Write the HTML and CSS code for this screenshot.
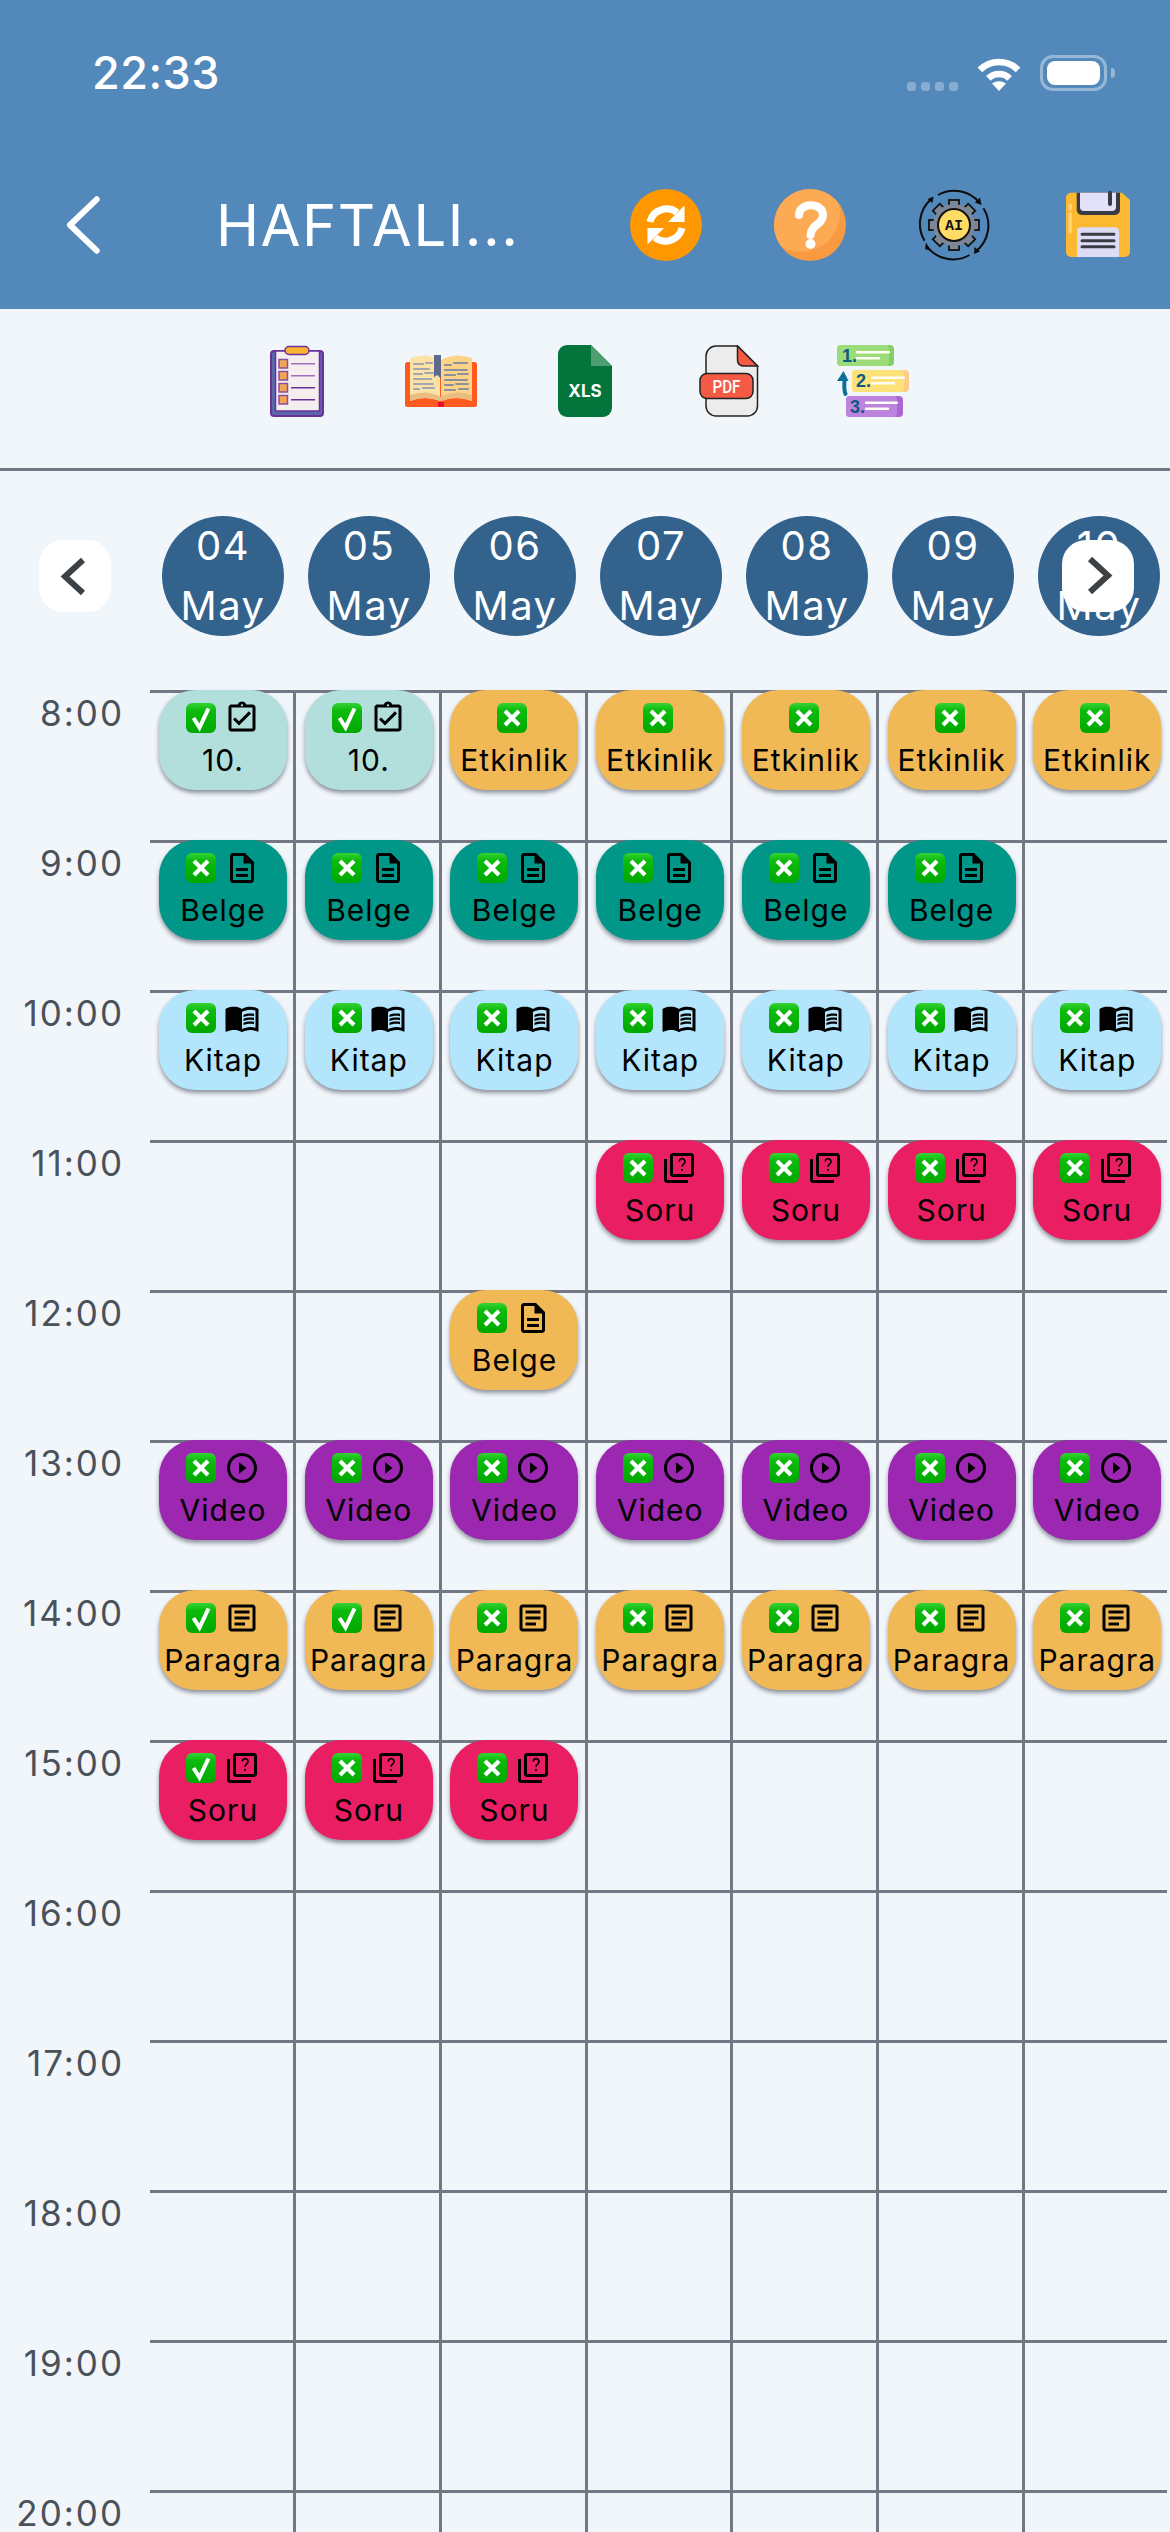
FILE: index.html
```html
<!DOCTYPE html>
<html lang="en">

<head>
  <meta charset="UTF-8">
  <meta name="viewport" content="width=device-width, initial-scale=1.0">
  <title>Haftalik Program</title>
  <link rel="stylesheet" href="styles.css">
</head>

<body>

  <!-- shared icons for the chips -->
  <svg class="defs" width="0" height="0">
    <defs>
      <linearGradient id="green" x1="0" y1="0" x2="0" y2="1">
        <stop offset="0" stop-color="#35d335" />
        <stop offset="0.25" stop-color="#0dbb0d" />
        <stop offset="1" stop-color="#00a800" />
      </linearGradient>
      <symbol id="yes" viewBox="0 0 30 30">
        <rect width="30" height="30" rx="6" fill="url(#green)" />
        <path d="M7.500 15l6 9.500L22.500 5.500" fill="none" stroke="#fff" stroke-width="4" />
      </symbol>
      <symbol id="no" viewBox="0 0 30 30">
        <rect width="30" height="30" rx="6" fill="url(#green)" />
        <path d="M8 8l14 14M22 8L8 22" fill="none" stroke="#fff" stroke-width="4.200" />
      </symbol>
      <symbol id="clip" viewBox="0 0 24 24">
        <path d="M18 9l-1.41-1.42L10 14.17l-2.59-2.58L6 13l4 4zm1-6h-4.18C14.4 1.84 13.3 1 12 1c-1.3 0-2.4.84-2.82 2H5c-.14 0-.27.01-.4.04-.39.08-.74.28-1.01.55-.18.18-.33.4-.43.64-.1.23-.16.49-.16.77v14c0 .27.06.54.16.78s.25.45.43.64c.27.27.62.47 1.01.55.13.02.26.03.4.03h14c1.1 0 2-.9 2-2V5c0-1.1-.9-2-2-2zm-7-.25c.41 0 .75.34.75.75s-.34.75-.75.75-.75-.34-.75-.75.34-.75.75-.75zM19 19H5V5h14v14z" />
      </symbol>
      <symbol id="doc" viewBox="0 0 24 24">
        <path d="M8 16h8v2H8zm0-4h8v2H8zm6-10H6c-1.1 0-2 .9-2 2v16c0 1.1.89 2 1.99 2H18c1.1 0 2-.9 2-2V8l-6-6zm4 18H6V4h7v5h5v11z" />
      </symbol>
      <symbol id="book" viewBox="0 0 24 24">
        <path d="M21 5c-1.11-.35-2.33-.5-3.5-.5-1.95 0-4.05.4-5.5 1.5-1.45-1.1-3.55-1.5-5.5-1.5S2.45 4.9 1 6v14.65c0 .25.25.5.5.5.1 0 .15-.05.25-.05C3.1 20.45 5.05 20 6.5 20c1.95 0 4.05.4 5.5 1.5 1.35-.85 3.8-1.5 5.5-1.5 1.65 0 3.35.3 4.75 1.05.1.05.15.05.25.05.25 0 .5-.25.5-.5V6c-.6-.45-1.25-.75-2-1zm0 13.5c-1.1-.35-2.3-.5-3.5-.5-1.7 0-4.15.65-5.5 1.5V8c1.35-.85 3.8-1.5 5.5-1.5 1.2 0 2.4.15 3.5.5v11.5z" />
        <path d="M17.5 10.5c.88 0 1.73.09 2.5.26V9.24c-.79-.15-1.64-.24-2.5-.24-1.7 0-3.24.29-4.5.83v1.66c1.13-.64 2.7-.99 4.5-.99zM13 12.49v1.66c1.13-.64 2.7-.99 4.5-.99.88 0 1.73.09 2.5.26V11.9c-.79-.15-1.64-.24-2.5-.24-1.7 0-3.24.3-4.5.83zM17.5 14.33c-1.7 0-3.24.29-4.5.83v1.66c1.13-.64 2.7-.99 4.5-.99.88 0 1.73.09 2.5.26v-1.52c-.79-.16-1.64-.24-2.5-.24z" />
      </symbol>
      <symbol id="quiz" viewBox="0 0 24 24">
        <path d="M4 6H2v14c0 1.1.9 2 2 2h14v-2H4V6zm16-4H8c-1.1 0-2 .9-2 2v12c0 1.1.9 2 2 2h12c1.1 0 2-.9 2-2V4c0-1.1-.9-2-2-2zm0 14H8V4h12v12z" />
        <path d="M12.2 7.6a1.9 1.9 0 1 1 3 1.6c-.8.6-1.2 1-1.2 2" fill="none" stroke="#000" stroke-width="1.1" />
        <circle cx="14" cy="13.4" r=".75" />
      </symbol>
      <symbol id="play" viewBox="0 0 24 24">
        <path d="M12 2C6.48 2 2 6.48 2 12s4.48 10 10 10 10-4.48 10-10S17.52 2 12 2zm0 18c-4.41 0-8-3.59-8-8s3.59-8 8-8 8 3.59 8 8-3.59 8-8 8z" />
        <path d="M10 15.8l5-3.8-5-3.8z" />
      </symbol>
      <symbol id="article" viewBox="0 0 24 24">
        <path d="M19 5v14H5V5h14m0-2H5c-1.1 0-2 .9-2 2v14c0 1.1.9 2 2 2h14c1.1 0 2-.9 2-2V5c0-1.1-.9-2-2-2z" />
        <path d="M14 17H7v-2h7v2zm3-4H7v-2h10v2zm0-4H7V7h10v2z" />
      </symbol>
    </defs>
  </svg>

  <header class="appbar">
    <div class="status">
      <span class="clock">22:33</span>
      <div class="status-icons">
        <div class="signal"><i></i><i></i><i></i><i></i></div>
        <svg class="wifi" viewBox="0 0 48 36">
          <path d="M4.9 14.9A27 27 0 0 1 43.1 14.9M13.4 23.4A15 15 0 0 1 34.6 23.4" fill="none" stroke="#fff" stroke-width="6.5" />
          <path d="M24 36L17 28.5Q24 24 31 28.5z" fill="#fff" />
        </svg>
        <div class="battery"><div class="battery-fill"></div></div>
        <div class="battery-cap"></div>
      </div>
    </div>
    <div class="nav">
      <svg class="back" viewBox="0 0 36 60">
        <path d="M31.7 4.3L5 30l26.7 25.7" fill="none" stroke="#fff" stroke-width="6" stroke-linecap="round" stroke-linejoin="round" />
      </svg>
      <h1 class="title">HAFTALI...</h1>
      <div class="actions">
        <svg class="action" viewBox="0 0 72 72">
          <circle cx="36" cy="36" r="36" fill="#ff9800" />
          <path d="M20 33A17 17 0 0 1 47 23.500M52 39A17 17 0 0 1 25 48.500" fill="none" stroke="#fff" stroke-width="7" />
          <path d="M54.500 16.500V33H38zM17.500 55.500V39H34z" fill="#fff" />
        </svg>
        <svg class="action" viewBox="0 0 72 72">
          <clipPath id="helpclip"><circle cx="36" cy="36" r="36" /></clipPath>
          <circle cx="36" cy="36" r="36" fill="#f99a41" />
          <circle cx="27" cy="24" r="39" fill="#fdaa55" clip-path="url(#helpclip)" />
          <path d="M25 26C25 13 49 13 49 26C49 36 37 35 36.500 46" fill="none" stroke="#fff" stroke-width="8" stroke-linecap="round" />
          <circle cx="36.500" cy="55" r="5" fill="#fff" />
        </svg>
        <svg class="action" viewBox="0 0 72 72">
          <g fill="none" stroke="#0c0c0c" stroke-width="2">
            <path d="M20 6A33 33 0 0 1 61.500 13.700" />
            <path d="M65.500 19.300A33 33 0 0 1 57.500 62.700" />
            <path d="M51.500 66A33 33 0 0 1 9 57.700" />
            <path d="M6.500 51.700A33 33 0 0 1 13 10.300" />
          </g>
          <path d="M63.500 16L57 13.500L62 8.500zM56 65L56.500 58L62 62.500zM7 60L13 62L8 53.500zM15.500 7.500L14.500 14L9.500 10z" fill="#0c0c0c" />
          <g fill="#7d8796" stroke="#111" stroke-width="1.800">
            <rect x="31" y="11" width="10" height="8" transform="rotate(0 36 36)" />
            <rect x="31" y="11" width="10" height="8" transform="rotate(45 36 36)" />
            <rect x="31" y="11" width="10" height="8" transform="rotate(90 36 36)" />
            <rect x="31" y="11" width="10" height="8" transform="rotate(135 36 36)" />
            <rect x="31" y="11" width="10" height="8" transform="rotate(180 36 36)" />
            <rect x="31" y="11" width="10" height="8" transform="rotate(225 36 36)" />
            <rect x="31" y="11" width="10" height="8" transform="rotate(270 36 36)" />
            <rect x="31" y="11" width="10" height="8" transform="rotate(315 36 36)" />
            <circle cx="36" cy="36" r="21" stroke="none" />
          </g>
          <circle cx="36" cy="36" r="16" fill="#ffdc64" stroke="#111" stroke-width="2" />
          <text class="ai-text" x="36" y="41" text-anchor="middle">AI</text>
        </svg>
        <svg class="action" viewBox="0 0 72 72">
          <path d="M9 3.700H60L68 11V63A5 5 0 0 1 63 68H9A5 5 0 0 1 4 63V8.700A5 5 0 0 1 9 3.700z" fill="#fbb931" />
          <path d="M14.700 3.700H58V21A5 5 0 0 1 53 26H19.700A5 5 0 0 1 14.700 21z" fill="#3b3b44" />
          <path d="M18 3.700H54V18A4 4 0 0 1 50 22H22A4 4 0 0 1 18 18z" fill="#e4e2fb" />
          <path d="M48 3.700V15" stroke="#3b3b44" stroke-width="4" stroke-linecap="round" />
          <path d="M15 68V42.300A4 4 0 0 1 19 38.300H53A4 4 0 0 1 57 42.300V68z" fill="#dcdcf6" />
          <path d="M20 45.300H52M20 51.700H52M20 57.700H52" stroke="#3b3b44" stroke-width="3" stroke-linecap="round" />
          <path d="M8.300 16V20M8.300 25V43" stroke="#fdd27a" stroke-width="3.500" stroke-linecap="round" />
        </svg>
      </div>
    </div>
  </header>

  <div class="tools">
    <svg class="tool" viewBox="0 0 72 72">
      <rect x="10" y="6" width="52" height="65" rx="3" fill="#5a6aa8" stroke="#6c2f9b" stroke-width="2" />
      <rect x="14.500" y="6" width="44" height="60" fill="#f4eeee" stroke="#6c2f9b" stroke-width="1.500" />
      <rect x="24" y="1.500" width="24" height="8" rx="4" fill="#f9b233" stroke="#6c2f9b" stroke-width="1.500" />
      <g fill="#f4a553" stroke="#8a4ea8" stroke-width="1.500">
        <rect x="18" y="14.500" width="8.500" height="8.500" />
        <rect x="18" y="26.500" width="8.500" height="8.500" />
        <rect x="18" y="38.500" width="8.500" height="8.500" />
        <rect x="18" y="50.500" width="8.500" height="8.500" />
      </g>
      <path d="M30 18.700H54M30 30.700H54" stroke="#a36bbd" stroke-width="1.500" />
      <path d="M30 42.700H54M30 54.700H54" stroke="#6c2f9b" stroke-width="1.500" />
    </svg>
    <svg class="tool" viewBox="0 0 72 72">
      <rect x="0" y="17" width="72" height="45" rx="2.500" fill="#ff5a1f" />
      <rect x="33" y="57" width="6" height="5" fill="#e8112d" />
      <path d="M5 13Q22 7 35 15V56Q20 50 5 56z" fill="#fde2a8" />
      <path d="M67 13Q50 7 36 15V56Q52 50 67 56z" fill="#fdd388" />
      <path d="M5 50Q22 44 36 52Q50 44 67 50V56Q50 50 36 56Q20 50 5 56z" fill="#e9bd80" />
      <path d="M29 10H36V34L32.500 30L29 32z" fill="#5d6a8e" />
      <g stroke="#a2a7b2" stroke-width="2.200" stroke-linecap="round">
        <path d="M9 19H18M21 18H27M9 24H24M9 29H17M20 28H28M9 34H26M9 39H28M9 44H14M18 43H29" />
      </g>
      <g stroke="#8b90a0" stroke-width="2.200" stroke-linecap="round">
        <path d="M40 20H46M49 18H62M40 25H62M40 30H50M53 29H63M40 35H62M40 40H48M51 39H63M40 45H50M54 44H63" />
      </g>
    </svg>
    <svg class="tool" viewBox="0 0 72 72">
      <path d="M18 0H42L63 21V63A9 9 0 0 1 54 72H18A9 9 0 0 1 9 63V9A9 9 0 0 1 18 0z" fill="#04743d" />
      <path d="M42 0L63 21H42z" fill="#4e9e72" />
      <text class="xls-text" x="36" y="52" text-anchor="middle">XLS</text>
    </svg>
    <svg class="tool" viewBox="0 0 72 72">
      <path d="M23 1H44.500L64.500 21V61A10 10 0 0 1 54.500 71H23A10 10 0 0 1 13 61V11A10 10 0 0 1 23 1z" fill="#ececec" stroke="#222" stroke-width="1.500" />
      <path d="M44.500 1L64.500 21H50A5.500 5.500 0 0 1 44.500 15.500z" fill="#f55a44" stroke="#222" stroke-width="1.500" />
      <rect x="7" y="28.500" width="53" height="25" rx="7" fill="#f55a44" stroke="#222" stroke-width="1.500" />
      <text class="pdf-text" x="19.500" y="47.500" textLength="28" lengthAdjust="spacingAndGlyphs">PDF</text>
    </svg>
    <svg class="tool" viewBox="0 0 72 72">
      <rect x="0" y="0" width="57" height="21" rx="4" fill="#85cf65" />
      <rect x="0" y="0" width="52" height="21" rx="4" fill="#9ddc7a" />
      <rect x="15" y="25" width="57" height="22" rx="4" fill="#fdcb85" />
      <rect x="15" y="25" width="52" height="22" rx="4" fill="#fde27a" />
      <rect x="9" y="51" width="57" height="21" rx="4" fill="#ab66d6" />
      <rect x="9" y="51" width="51" height="21" rx="4" fill="#bd83dd" />
      <text class="num-text" x="5" y="17">1.</text>
      <text class="num-text" x="19" y="42">2.</text>
      <text class="num-text" x="13" y="68">3.</text>
      <path d="M20 7.300H52M20 13.300H42M35 32.700H67M35 38.300H57M29 57.700H60M29 63.700H51" stroke="#fdfdf5" stroke-width="2.400" stroke-linecap="round" fill="none" />
      <path d="M8.500 49C6.500 44 7.500 38 7.500 33" stroke="#0e6f96" stroke-width="4" fill="none" stroke-linecap="round" />
      <path d="M0 36L6.500 26L11.500 36z" fill="#0e6f96" />
    </svg>
  </div>

  <div class="dates">
    <button class="page-btn">
      <svg viewBox="0 0 72 72"><path d="M44 20L26 36.500L44 53" fill="none" stroke="#3c4146" stroke-width="6" /></svg>
    </button>
    <div class="day">04<br>May</div>
    <div class="day">05<br>May</div>
    <div class="day">06<br>May</div>
    <div class="day">07<br>May</div>
    <div class="day">08<br>May</div>
    <div class="day">09<br>May</div>
    <div class="day">10<br>May</div>
    <button class="page-btn page-next">
      <svg viewBox="0 0 72 72"><path d="M28 19L46 35.500L28 52" fill="none" stroke="#3c4146" stroke-width="6" /></svg>
    </button>
  </div>

  <main class="schedule">
    <div class="row">
      <div class="hour">8:00</div>
      <div class="cell"><div class="chip mint"><div class="chip-icons"><svg class="emoji"><use href="#yes" /></svg><svg class="ico"><use href="#clip" /></svg></div><span>10.</span></div></div>
      <div class="cell"><div class="chip mint"><div class="chip-icons"><svg class="emoji"><use href="#yes" /></svg><svg class="ico"><use href="#clip" /></svg></div><span>10.</span></div></div>
      <div class="cell"><div class="chip amber"><div class="chip-icons solo"><svg class="emoji"><use href="#no" /></svg></div><span>Etkinlik</span></div></div>
      <div class="cell"><div class="chip amber"><div class="chip-icons solo"><svg class="emoji"><use href="#no" /></svg></div><span>Etkinlik</span></div></div>
      <div class="cell"><div class="chip amber"><div class="chip-icons solo"><svg class="emoji"><use href="#no" /></svg></div><span>Etkinlik</span></div></div>
      <div class="cell"><div class="chip amber"><div class="chip-icons solo"><svg class="emoji"><use href="#no" /></svg></div><span>Etkinlik</span></div></div>
      <div class="cell"><div class="chip amber"><div class="chip-icons solo"><svg class="emoji"><use href="#no" /></svg></div><span>Etkinlik</span></div></div>
    </div>
    <div class="row">
      <div class="hour">9:00</div>
      <div class="cell"><div class="chip teal"><div class="chip-icons"><svg class="emoji"><use href="#no" /></svg><svg class="ico"><use href="#doc" /></svg></div><span>Belge</span></div></div>
      <div class="cell"><div class="chip teal"><div class="chip-icons"><svg class="emoji"><use href="#no" /></svg><svg class="ico"><use href="#doc" /></svg></div><span>Belge</span></div></div>
      <div class="cell"><div class="chip teal"><div class="chip-icons"><svg class="emoji"><use href="#no" /></svg><svg class="ico"><use href="#doc" /></svg></div><span>Belge</span></div></div>
      <div class="cell"><div class="chip teal"><div class="chip-icons"><svg class="emoji"><use href="#no" /></svg><svg class="ico"><use href="#doc" /></svg></div><span>Belge</span></div></div>
      <div class="cell"><div class="chip teal"><div class="chip-icons"><svg class="emoji"><use href="#no" /></svg><svg class="ico"><use href="#doc" /></svg></div><span>Belge</span></div></div>
      <div class="cell"><div class="chip teal"><div class="chip-icons"><svg class="emoji"><use href="#no" /></svg><svg class="ico"><use href="#doc" /></svg></div><span>Belge</span></div></div>
      <div class="cell"></div>
    </div>
    <div class="row">
      <div class="hour">10:00</div>
      <div class="cell"><div class="chip sky"><div class="chip-icons"><svg class="emoji"><use href="#no" /></svg><svg class="ico"><use href="#book" /></svg></div><span>Kitap</span></div></div>
      <div class="cell"><div class="chip sky"><div class="chip-icons"><svg class="emoji"><use href="#no" /></svg><svg class="ico"><use href="#book" /></svg></div><span>Kitap</span></div></div>
      <div class="cell"><div class="chip sky"><div class="chip-icons"><svg class="emoji"><use href="#no" /></svg><svg class="ico"><use href="#book" /></svg></div><span>Kitap</span></div></div>
      <div class="cell"><div class="chip sky"><div class="chip-icons"><svg class="emoji"><use href="#no" /></svg><svg class="ico"><use href="#book" /></svg></div><span>Kitap</span></div></div>
      <div class="cell"><div class="chip sky"><div class="chip-icons"><svg class="emoji"><use href="#no" /></svg><svg class="ico"><use href="#book" /></svg></div><span>Kitap</span></div></div>
      <div class="cell"><div class="chip sky"><div class="chip-icons"><svg class="emoji"><use href="#no" /></svg><svg class="ico"><use href="#book" /></svg></div><span>Kitap</span></div></div>
      <div class="cell"><div class="chip sky"><div class="chip-icons"><svg class="emoji"><use href="#no" /></svg><svg class="ico"><use href="#book" /></svg></div><span>Kitap</span></div></div>
    </div>
    <div class="row">
      <div class="hour">11:00</div>
      <div class="cell"></div>
      <div class="cell"></div>
      <div class="cell"></div>
      <div class="cell"><div class="chip pink"><div class="chip-icons"><svg class="emoji"><use href="#no" /></svg><svg class="ico"><use href="#quiz" /></svg></div><span>Soru</span></div></div>
      <div class="cell"><div class="chip pink"><div class="chip-icons"><svg class="emoji"><use href="#no" /></svg><svg class="ico"><use href="#quiz" /></svg></div><span>Soru</span></div></div>
      <div class="cell"><div class="chip pink"><div class="chip-icons"><svg class="emoji"><use href="#no" /></svg><svg class="ico"><use href="#quiz" /></svg></div><span>Soru</span></div></div>
      <div class="cell"><div class="chip pink"><div class="chip-icons"><svg class="emoji"><use href="#no" /></svg><svg class="ico"><use href="#quiz" /></svg></div><span>Soru</span></div></div>
    </div>
    <div class="row">
      <div class="hour">12:00</div>
      <div class="cell"></div>
      <div class="cell"></div>
      <div class="cell"><div class="chip amber"><div class="chip-icons"><svg class="emoji"><use href="#no" /></svg><svg class="ico"><use href="#doc" /></svg></div><span>Belge</span></div></div>
      <div class="cell"></div>
      <div class="cell"></div>
      <div class="cell"></div>
      <div class="cell"></div>
    </div>
    <div class="row">
      <div class="hour">13:00</div>
      <div class="cell"><div class="chip purple"><div class="chip-icons"><svg class="emoji"><use href="#no" /></svg><svg class="ico"><use href="#play" /></svg></div><span>Video</span></div></div>
      <div class="cell"><div class="chip purple"><div class="chip-icons"><svg class="emoji"><use href="#no" /></svg><svg class="ico"><use href="#play" /></svg></div><span>Video</span></div></div>
      <div class="cell"><div class="chip purple"><div class="chip-icons"><svg class="emoji"><use href="#no" /></svg><svg class="ico"><use href="#play" /></svg></div><span>Video</span></div></div>
      <div class="cell"><div class="chip purple"><div class="chip-icons"><svg class="emoji"><use href="#no" /></svg><svg class="ico"><use href="#play" /></svg></div><span>Video</span></div></div>
      <div class="cell"><div class="chip purple"><div class="chip-icons"><svg class="emoji"><use href="#no" /></svg><svg class="ico"><use href="#play" /></svg></div><span>Video</span></div></div>
      <div class="cell"><div class="chip purple"><div class="chip-icons"><svg class="emoji"><use href="#no" /></svg><svg class="ico"><use href="#play" /></svg></div><span>Video</span></div></div>
      <div class="cell"><div class="chip purple"><div class="chip-icons"><svg class="emoji"><use href="#no" /></svg><svg class="ico"><use href="#play" /></svg></div><span>Video</span></div></div>
    </div>
    <div class="row">
      <div class="hour">14:00</div>
      <div class="cell"><div class="chip amber"><div class="chip-icons"><svg class="emoji"><use href="#yes" /></svg><svg class="ico"><use href="#article" /></svg></div><span>Paragra</span></div></div>
      <div class="cell"><div class="chip amber"><div class="chip-icons"><svg class="emoji"><use href="#yes" /></svg><svg class="ico"><use href="#article" /></svg></div><span>Paragra</span></div></div>
      <div class="cell"><div class="chip amber"><div class="chip-icons"><svg class="emoji"><use href="#no" /></svg><svg class="ico"><use href="#article" /></svg></div><span>Paragra</span></div></div>
      <div class="cell"><div class="chip amber"><div class="chip-icons"><svg class="emoji"><use href="#no" /></svg><svg class="ico"><use href="#article" /></svg></div><span>Paragra</span></div></div>
      <div class="cell"><div class="chip amber"><div class="chip-icons"><svg class="emoji"><use href="#no" /></svg><svg class="ico"><use href="#article" /></svg></div><span>Paragra</span></div></div>
      <div class="cell"><div class="chip amber"><div class="chip-icons"><svg class="emoji"><use href="#no" /></svg><svg class="ico"><use href="#article" /></svg></div><span>Paragra</span></div></div>
      <div class="cell"><div class="chip amber"><div class="chip-icons"><svg class="emoji"><use href="#no" /></svg><svg class="ico"><use href="#article" /></svg></div><span>Paragra</span></div></div>
    </div>
    <div class="row">
      <div class="hour">15:00</div>
      <div class="cell"><div class="chip pink"><div class="chip-icons"><svg class="emoji"><use href="#yes" /></svg><svg class="ico"><use href="#quiz" /></svg></div><span>Soru</span></div></div>
      <div class="cell"><div class="chip pink"><div class="chip-icons"><svg class="emoji"><use href="#no" /></svg><svg class="ico"><use href="#quiz" /></svg></div><span>Soru</span></div></div>
      <div class="cell"><div class="chip pink"><div class="chip-icons"><svg class="emoji"><use href="#no" /></svg><svg class="ico"><use href="#quiz" /></svg></div><span>Soru</span></div></div>
      <div class="cell"></div>
      <div class="cell"></div>
      <div class="cell"></div>
      <div class="cell"></div>
    </div>
    <div class="row">
      <div class="hour">16:00</div>
      <div class="cell"></div><div class="cell"></div><div class="cell"></div><div class="cell"></div><div class="cell"></div><div class="cell"></div><div class="cell"></div>
    </div>
    <div class="row">
      <div class="hour">17:00</div>
      <div class="cell"></div><div class="cell"></div><div class="cell"></div><div class="cell"></div><div class="cell"></div><div class="cell"></div><div class="cell"></div>
    </div>
    <div class="row">
      <div class="hour">18:00</div>
      <div class="cell"></div><div class="cell"></div><div class="cell"></div><div class="cell"></div><div class="cell"></div><div class="cell"></div><div class="cell"></div>
    </div>
    <div class="row">
      <div class="hour">19:00</div>
      <div class="cell"></div><div class="cell"></div><div class="cell"></div><div class="cell"></div><div class="cell"></div><div class="cell"></div><div class="cell"></div>
    </div>
    <div class="row">
      <div class="hour">20:00</div>
      <div class="cell"></div><div class="cell"></div><div class="cell"></div><div class="cell"></div><div class="cell"></div><div class="cell"></div><div class="cell"></div>
    </div>
  </main>

</body>

</html>
```

FILE: styles.css
```css
* {
  box-sizing: border-box;
}

body {
  font-family: 'Inter', 'Noto Sans', sans-serif;
  background-color: #f1f6fb;
  margin: 0;
  padding: 0;
  width: 1170px;
  height: 2532px;
  overflow: hidden;
}

.defs {
  position: absolute;
}

/* top bar */
.appbar {
  background-color: #5388bb;
  height: 309px;
}

.status {
  height: 189px;
  padding: 46px 55px 0 92px;
  display: flex;
  justify-content: space-between;
  align-items: flex-start;
}

.clock {
  color: #fff;
  font-size: 45px;
  font-weight: 500;
  line-height: 54px;
  letter-spacing: 0.5px;
}

.status-icons {
  display: flex;
  align-items: flex-start;
  margin-top: 9px;
}

.signal {
  display: flex;
  gap: 5px;
  margin-top: 27px;
  margin-right: 17px;
}

.signal i {
  width: 9px;
  height: 9px;
  border-radius: 3px;
  background-color: rgba(255, 255, 255, 0.3);
}

.wifi {
  width: 48px;
  height: 36px;
  margin-right: 17px;
}

.battery {
  width: 67px;
  height: 36px;
  border: 3px solid rgba(255, 255, 255, 0.4);
  border-radius: 13px;
  padding: 3px 4px;
}

.battery-fill {
  height: 100%;
  background-color: #fff;
  border-radius: 8px;
}

.battery-cap {
  width: 4px;
  height: 10px;
  margin: 13px 0 0 4px;
  background-color: rgba(255, 255, 255, 0.4);
  border-radius: 0 4px 4px 0;
}

.nav {
  height: 72px;
  padding: 0 36px 0 65px;
  display: flex;
  align-items: center;
}

.back {
  width: 36px;
  height: 60px;
  flex: none;
}

.title {
  margin: 0 0 0 115px;
  color: #fff;
  font-size: 58px;
  font-weight: 400;
  line-height: 72px;
  letter-spacing: 1.5px;
}

.actions {
  margin-left: auto;
  display: flex;
  gap: 72px;
}

.action {
  width: 72px;
  height: 72px;
}

.ai-text {
  font-family: 'Liberation Mono', monospace;
  font-size: 15px;
  font-weight: 700;
  fill: #111;
}

/* icon strip */
.tools {
  height: 162px;
  padding-top: 36px;
  border-bottom: 3px solid #737884;
  display: flex;
  justify-content: center;
  align-items: flex-start;
  gap: 72px;
}

.tool {
  width: 72px;
  height: 72px;
}

.xls-text {
  font-family: 'Inter', sans-serif;
  font-size: 17px;
  font-weight: 700;
  fill: #fff;
}

.pdf-text {
  font-family: 'Roboto', sans-serif;
  font-size: 18px;
  font-weight: 500;
  fill: #fff;
}

.num-text {
  font-family: 'Liberation Sans', sans-serif;
  font-size: 18px;
  font-weight: 700;
  fill: #0e5a82;
}

/* day header */
.dates {
  position: relative;
  height: 219px;
  padding: 45px 0 0 39px;
  display: flex;
  align-items: flex-start;
  overflow: hidden;
}

.page-btn {
  width: 72px;
  height: 72px;
  padding: 0;
  border: none;
  border-radius: 24px;
  background-color: #fff;
  flex: none;
  margin: 24px 51px 0 0;
}

.page-btn svg {
  display: block;
  width: 72px;
  height: 72px;
}

.page-next {
  position: absolute;
  top: 45px;
  left: 1062px;
  margin: 24px 0 0 0;
}

.day {
  width: 122px;
  height: 120px;
  flex: none;
  margin-right: 24px;
  border-radius: 50%;
  overflow: hidden;
  background-color: #33628d;
  color: #fff;
  font-size: 40px;
  line-height: 60px;
  letter-spacing: 1.5px;
  text-align: center;
}

/* timetable */
.row {
  display: grid;
  grid-template-columns: 150px 143.3px repeat(6, 145.7px);
  height: 150px;
}

.hour {
  padding: 3px 26px 0 0;
  text-align: right;
  color: #4a5159;
  font-size: 35px;
  line-height: 40px;
  letter-spacing: 2px;
}

.cell {
  border-top: 3px solid #737884;
  border-left: 3px solid #737884;
  padding-left: 8.5px;
}

.hour + .cell {
  border-left: none;
  padding-left: 9px;
}

.chip {
  width: 128px;
  height: 100px;
  margin-top: -3px;
  padding-top: 10px;
  border-radius: 36px;
  box-shadow: 0 3px 4px rgba(60, 65, 80, 0.55);
  overflow: hidden;
  color: #000;
  font-size: 30px;
  line-height: 36px;
  letter-spacing: 1px;
  text-align: center;
  white-space: nowrap;
}

.chip-icons {
  height: 36px;
  margin-bottom: 6px;
  display: flex;
  justify-content: center;
  align-items: center;
  gap: 8px;
}

.chip-icons.solo {
  padding-right: 4px;
}

.emoji {
  width: 30px;
  height: 30px;
}

.ico {
  width: 36px;
  height: 36px;
}

.mint {
  background-color: #b2dfdb;
}

.amber {
  background-color: #f1b856;
}

.teal {
  background-color: #009688;
}

.sky {
  background-color: #b3e5fc;
}

.pink {
  background-color: #e91e63;
}

.purple {
  background-color: #9c27b0;
}
```
